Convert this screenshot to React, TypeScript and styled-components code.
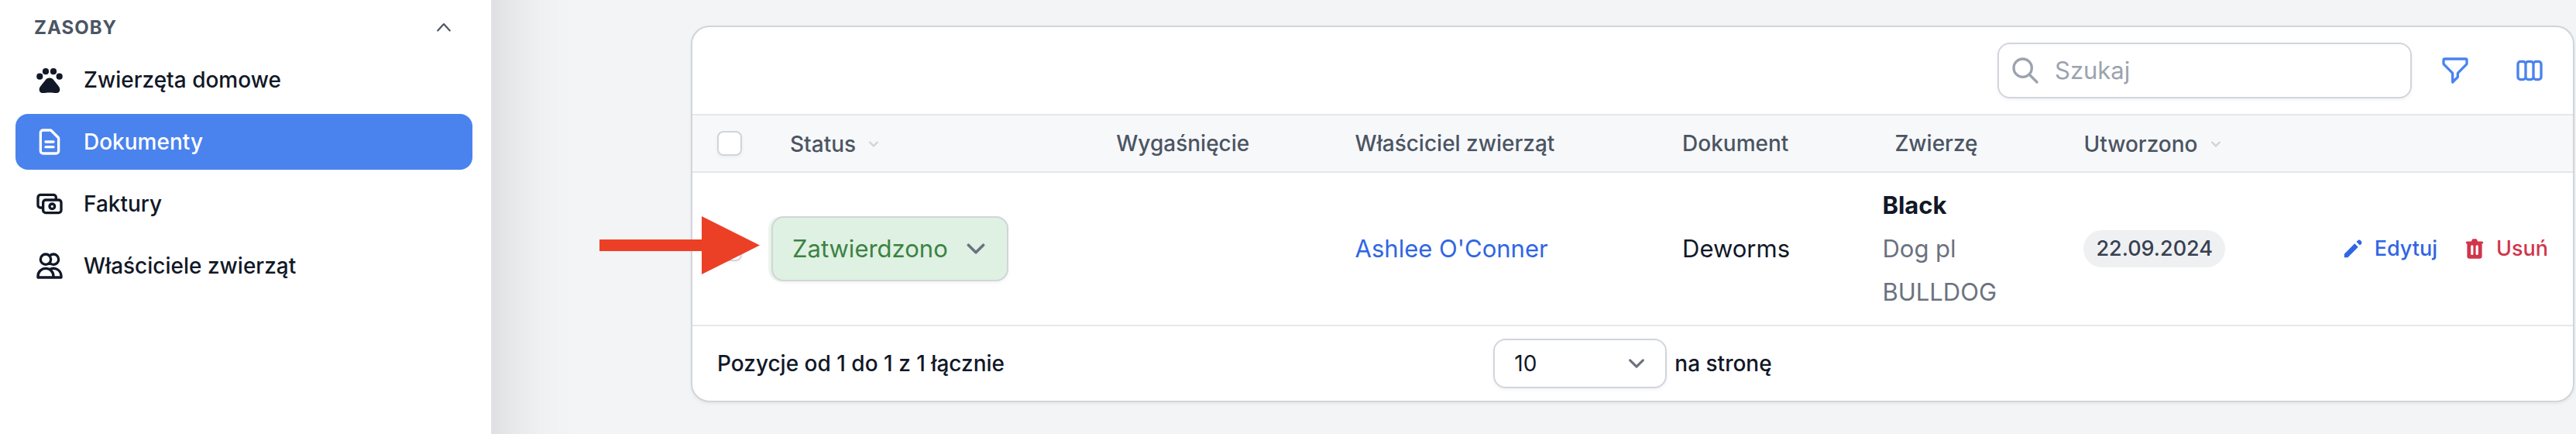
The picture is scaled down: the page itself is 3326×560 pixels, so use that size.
import React from 'react';
import styled, { createGlobalStyle } from 'styled-components';

const Global = createGlobalStyle`
  *, *::before, *::after { box-sizing: border-box; }
  body { margin: 0; background: #f3f4f6; color: #111827; font-family: Inter, "Liberation Sans", sans-serif; font-size: 28px; line-height: 40px; }
  button, input, select { font: inherit; color: inherit; margin: 0; }
`;

const Page = styled.div`
  display: flex;
  min-height: 100vh;
  overflow: hidden;
`;

const Sidebar = styled.aside`
  flex: 0 0 634px;
  background: #fff;
  padding: 16px 24px 24px 20px;
  box-shadow: 0 0 0 2px #e2e3e8, -200px 0 100px 200px rgba(0, 0, 0, 0.16);
`;

const GroupToggle = styled.button`
  display: flex;
  align-items: center;
  justify-content: space-between;
  width: 100%;
  height: 40px;
  padding: 0 20px 0 24px;
  border: 0;
  background: none;
  color: #4b5563;
  font-size: 24px;
  font-weight: 700;
  letter-spacing: 1px;
  text-transform: uppercase;
`;

const NavList = styled.ul`
  display: flex;
  flex-direction: column;
  gap: 8px;
  margin: 11px 0 0;
  padding: 0;
  list-style: none;
`;

const NavLink = styled.a<{ $active?: boolean }>`
  display: flex;
  align-items: center;
  gap: 24px;
  height: 72px;
  padding: 0 24px;
  border-radius: 16px;
  text-decoration: none;
  font-weight: 500;
  color: ${p => (p.$active ? '#fff' : '#111827')};
  background: ${p => (p.$active ? '#4a83ee' : 'transparent')};
`;

const Content = styled.main`
  position: relative;
  flex: 1;
  min-width: 0;
  padding: 33px 2px 40px 258px;
`;

const Card = styled.section`
  background: #fff;
  border: 2px solid #d1d5db;
  border-radius: 24px;
  box-shadow: 0 2px 4px rgba(0, 0, 0, 0.06);
  overflow: hidden;
`;

const Toolbar = styled.div`
  display: flex;
  justify-content: flex-end;
  align-items: center;
  gap: 16px;
  padding: 20px 16px;
`;

const SearchBox = styled.label`
  display: flex;
  align-items: center;
  gap: 18px;
  width: 535px;
  height: 72px;
  padding: 0 14px;
  border: 2px solid #d1d5db;
  border-radius: 16px;
  color: #9ca3af;
  font-size: 31px;
  box-shadow: 0 2px 4px rgba(0, 0, 0, 0.06);
`;

const SearchInput = styled.input`
  flex: 1;
  min-width: 0;
  border: 0;
  outline: 0;
  background: none;
  padding: 0;
  &::placeholder { color: #9ca3af; opacity: 1; }
`;

const IconButton = styled.button`
  display: flex;
  align-items: center;
  justify-content: center;
  width: 80px;
  height: 72px;
  padding: 0;
  border: 0;
  background: none;
  color: #4a83ee;
`;

const Table = styled.table`
  width: 100%;
  border-collapse: separate;
  border-spacing: 0;
  table-layout: fixed;
  text-align: left;
`;

const Col = styled.col<{ $width?: string }>`
  width: ${p => p.$width ?? 'auto'};
`;

const HeadCell = styled.th<{ $inset?: number }>`
  height: 76px;
  padding: 0 0 0 ${p => p.$inset ?? 28}px;
  border: solid #e5e7eb;
  border-width: 2px 0;
  background: #f7f8fa;
  color: #4b5563;
  font-weight: 500;
  white-space: nowrap;
`;

const SortButton = styled.button`
  display: inline-flex;
  align-items: center;
  gap: 11px;
  padding: 0;
  border: 0;
  background: none;
  vertical-align: middle;
  svg { color: #d1d5db; }
`;

const Cell = styled.td<{ $inset?: number }>`
  height: 198px;
  padding: 0 0 0 ${p => p.$inset ?? 28}px;
  border-bottom: 2px solid #e5e7eb;
  font-size: 31px;
  white-space: nowrap;
`;

const Checkbox = styled.input`
  appearance: none;
  display: block;
  width: 32px;
  height: 32px;
  border: 2px solid #d1d5db;
  border-radius: 8px;
  background: #fff;
  box-shadow: 0 2px 4px rgba(0, 0, 0, 0.05);
`;

const StatusTint = styled.div`
  width: 310px;
  padding-left: 4px;
  border-radius: 16px;
  background: #ecf7ee;
`;

const SelectWrap = styled.span<{ $tone?: 'green' }>`
  display: grid;
  align-items: center;
  width: ${p => (p.$tone ? '100%' : '224px')};
  height: ${p => (p.$tone ? 84 : 64)}px;
  border-radius: 16px;
  color: ${p => (p.$tone ? '#3c8244' : '#111827')};
  background: ${p => (p.$tone ? '#dff1e2' : '#fff')};
  box-shadow: 0 2px 4px rgba(0, 0, 0, 0.05);
  font-weight: 400;
  > * { grid-area: 1 / 1; }
  svg { justify-self: end; margin-right: 18px; color: #6b7280; pointer-events: none; }
`;

const Select = styled.select`
  appearance: none;
  width: 100%;
  height: 100%;
  padding: 0 64px 0 25px;
  border: 2px solid #d1d5db;
  border-radius: 16px;
  background: none;
`;

const TextLink = styled.a`
  color: #2f66e3;
  text-decoration: none;
`;

const PetCard = styled.div`
  line-height: 56px;
  color: #6b7280;
  strong { display: block; font-weight: 700; color: #111827; }
  span { display: block; }
`;

const DateBadge = styled.span`
  display: inline-block;
  padding: 0 16px;
  border-radius: 24px;
  background: #eff0f2;
  color: #374151;
  font-size: 27px;
  font-weight: 500;
  line-height: 48px;
  vertical-align: middle;
`;

const Actions = styled.div`
  display: flex;
  justify-content: flex-end;
  gap: 32px;
  padding-right: 32px;
`;

const Action = styled.button<{ $danger?: boolean }>`
  display: flex;
  align-items: center;
  gap: 12px;
  padding: 0;
  border: 0;
  background: none;
  font-size: 27px;
  font-weight: 500;
  color: ${p => (p.$danger ? '#d1354b' : '#2f66e3')};
`;

const Footer = styled.footer`
  display: grid;
  grid-template-columns: 1fr auto 1fr;
  align-items: center;
  padding: 16px 32px;
  font-weight: 500;
`;

const PerPage = styled.label`
  display: flex;
  align-items: center;
  gap: 10px;
`;

const Arrow = styled.svg`
  position: absolute;
  left: 140px;
  top: 279px;
`;

type IconProps = { size?: number; width?: number; children: React.ReactNode };

const Outline = ({ size = 40, width = 2, children }: IconProps) => (
  <svg width={size} height={size} viewBox="0 0 24 24" fill="none" stroke="currentColor" strokeWidth={width} strokeLinecap="round" strokeLinejoin="round" aria-hidden="true">{children}</svg>
);

const Solid = ({ size = 32, children }: IconProps) => (
  <svg width={size} height={size} viewBox="0 0 20 20" fill="currentColor" aria-hidden="true">{children}</svg>
);

const Chevron = ({ size, width = 2 }: { size: number; width?: number }) => (
  <svg width={size} height={size} viewBox="0 0 20 20" fill="none" stroke="currentColor" strokeWidth={width} strokeLinecap="round" strokeLinejoin="round" aria-hidden="true"><path d="M6 8l4 4 4-4" /></svg>
);

const Paw = () => (
  <svg width="40" height="40" viewBox="0 0 40 40" fill="currentColor" aria-hidden="true">
    <circle cx="7.3" cy="15.7" r="4.1" />
    <circle cx="15" cy="9.2" r="4.1" />
    <circle cx="25" cy="9.2" r="4.1" />
    <circle cx="32.7" cy="15.7" r="4.1" />
    <path d="M20 17.6c-2.300 0-4.200 1.200-5.700 3.200l-5.800 7.200c-1.300 1.600-1.800 3-1.800 4.700 0 2.500 1.600 4.200 4.200 4.200 3.200 0 5.600-.5 9.100-.5s5.900.5 9.100.5c2.600 0 4.200-1.700 4.200-4.200 0-1.700-.5-3.100-1.800-4.700l-5.800-7.200c-1.500-2-3.400-3.200-5.700-3.200z" />
  </svg>
);

const items = [
  { name: 'Zwierzęta domowe', icon: <Paw /> },
  { name: 'Dokumenty', active: true, icon: <Outline><path d="M9 12h6m-6 4h6m2 5H7a2 2 0 0 1-2-2V5a2 2 0 0 1 2-2h5.586a1 1 0 0 1 .707.293l5.414 5.414a1 1 0 0 1 .293.707V19a2 2 0 0 1-2 2z" /></Outline> },
  { name: 'Faktury', icon: <Outline><path d="M17 9V7a2 2 0 0 0-2-2H5a2 2 0 0 0-2 2v6a2 2 0 0 0 2 2h2m2 4h10a2 2 0 0 0 2-2v-6a2 2 0 0 0-2-2H9a2 2 0 0 0-2 2v6a2 2 0 0 0 2 2zm7-5a2 2 0 1 1-4 0 2 2 0 0 1 4 0z" /></Outline> },
  { name: 'Właściciele zwierząt', icon: <Outline><path d="M12 4.354a4 4 0 1 1 0 5.292M15 21H3v-1a6 6 0 0 1 12 0v1zm0 0h6v-1a6 6 0 0 0-9-5.197M13 7a4 4 0 1 1-8 0 4 4 0 0 1 8 0z" /></Outline> },
];

export default function App() {
  return (
    <Page>
      <Global />
      <Sidebar>
        <GroupToggle>
          Zasoby
          <Outline size={34} width={1.5}><path d="M6.500 14.500l5.500-6 5.500 6" /></Outline>
        </GroupToggle>
        <nav>
          <NavList>
            {items.map(i => (
              <li key={i.name}><NavLink href="#" $active={i.active}>{i.icon}{i.name}</NavLink></li>
            ))}
          </NavList>
        </nav>
      </Sidebar>
      <Content>
        <Card>
          <Toolbar>
            <SearchBox>
              <Outline><path d="M21 21l-6-6m2-5a7 7 0 1 1-14 0 7 7 0 0 1 14 0z" /></Outline>
              <SearchInput type="text" placeholder="Szukaj" aria-label="Szukaj" />
            </SearchBox>
            <IconButton aria-label="Filtry"><Outline><path d="M3 4a1 1 0 0 1 1-1h16a1 1 0 0 1 1 1v2.586a1 1 0 0 1-.293.707l-6.414 6.414a1 1 0 0 0-.293.707V17l-4 4v-6.586a1 1 0 0 0-.293-.707L3.293 7.293A1 1 0 0 1 3 6.586z" /></Outline></IconButton>
            <IconButton aria-label="Kolumny"><Outline><path d="M9 17V7m0 10a2 2 0 0 1-2 2H5a2 2 0 0 1-2-2V7a2 2 0 0 1 2-2h2a2 2 0 0 1 2 2m0 10a2 2 0 0 0 2 2h2a2 2 0 0 0 2-2M9 7a2 2 0 0 1 2-2h2a2 2 0 0 1 2 2m0 10V7m0 10a2 2 0 0 0 2 2h2a2 2 0 0 0 2-2V7a2 2 0 0 0-2-2h-2a2 2 0 0 0-2 2" /></Outline></IconButton>
          </Toolbar>
          <Table>
            <colgroup>
              <Col $width="98px" />
              <Col $width="17.35%" />
              <Col $width="12.7%" />
              <Col $width="17.4%" />
              <Col $width="11.3%" />
              <Col $width="10.05%" />
              <Col $width="11.5%" />
              <Col />
            </colgroup>
            <thead>
              <tr>
                <HeadCell $inset={32}><Checkbox type="checkbox" aria-label="Zaznacz wszystkie" /></HeadCell>
                <HeadCell><SortButton>Status <Chevron size={24} /></SortButton></HeadCell>
                <HeadCell>Wygaśnięcie</HeadCell>
                <HeadCell>Właściciel zwierząt</HeadCell>
                <HeadCell>Dokument</HeadCell>
                <HeadCell>Zwierzę</HeadCell>
                <HeadCell><SortButton>Utworzono <Chevron size={24} /></SortButton></HeadCell>
                <HeadCell aria-label="Akcje" />
              </tr>
            </thead>
            <tbody>
              <tr>
                <Cell $inset={32}><Checkbox type="checkbox" aria-label="Zaznacz" /></Cell>
                <Cell $inset={0}>
                  <StatusTint>
                    <SelectWrap $tone="green">
                      <Select aria-label="Status"><option>Zatwierdzono</option></Select>
                      <Chevron size={48} width={1.5} />
                    </SelectWrap>
                  </StatusTint>
                </Cell>
                <Cell />
                <Cell><TextLink href="#">Ashlee O'Conner</TextLink></Cell>
                <Cell>Deworms</Cell>
                <Cell $inset={12}><PetCard><strong>Black</strong><span>Dog pl</span><span>BULLDOG</span></PetCard></Cell>
                <Cell><DateBadge>22.09.2024</DateBadge></Cell>
                <Cell>
                  <Actions>
                    <Action><Solid><path d="M13.586 3.586a2 2 0 1 1 2.828 2.828l-.793.793-2.828-2.828zM11.379 5.793 3 14.172V17h2.828l8.380-8.379z" /></Solid>Edytuj</Action>
                    <Action $danger><Solid><path fillRule="evenodd" d="M9 2a1 1 0 0 0-.894.553L7.382 4H4a1 1 0 0 0 0 2v10a2 2 0 0 0 2 2h8a2 2 0 0 0 2-2V6a1 1 0 1 0 0-2h-3.382l-.724-1.447A1 1 0 0 0 11 2zM7 8a1 1 0 0 1 2 0v6a1 1 0 1 1-2 0zm5-1a1 1 0 0 0-1 1v6a1 1 0 1 0 2 0V8a1 1 0 0 0-1-1z" clipRule="evenodd" /></Solid>Usuń</Action>
                  </Actions>
                </Cell>
              </tr>
            </tbody>
          </Table>
          <Footer>
            <span>Pozycje od 1 do 1 z 1 łącznie</span>
            <PerPage>
              <SelectWrap>
                <Select><option>10</option></Select>
                <Chevron size={42} width={1.5} />
              </SelectWrap>
              na stronę
            </PerPage>
          </Footer>
        </Card>
        <Arrow width="208" height="75" viewBox="0 0 208 75" fill="#eb4026" aria-hidden="true"><path d="M0 30h132V0l75 37.500L132 75V45H0z" /></Arrow>
      </Content>
    </Page>
  );
}
